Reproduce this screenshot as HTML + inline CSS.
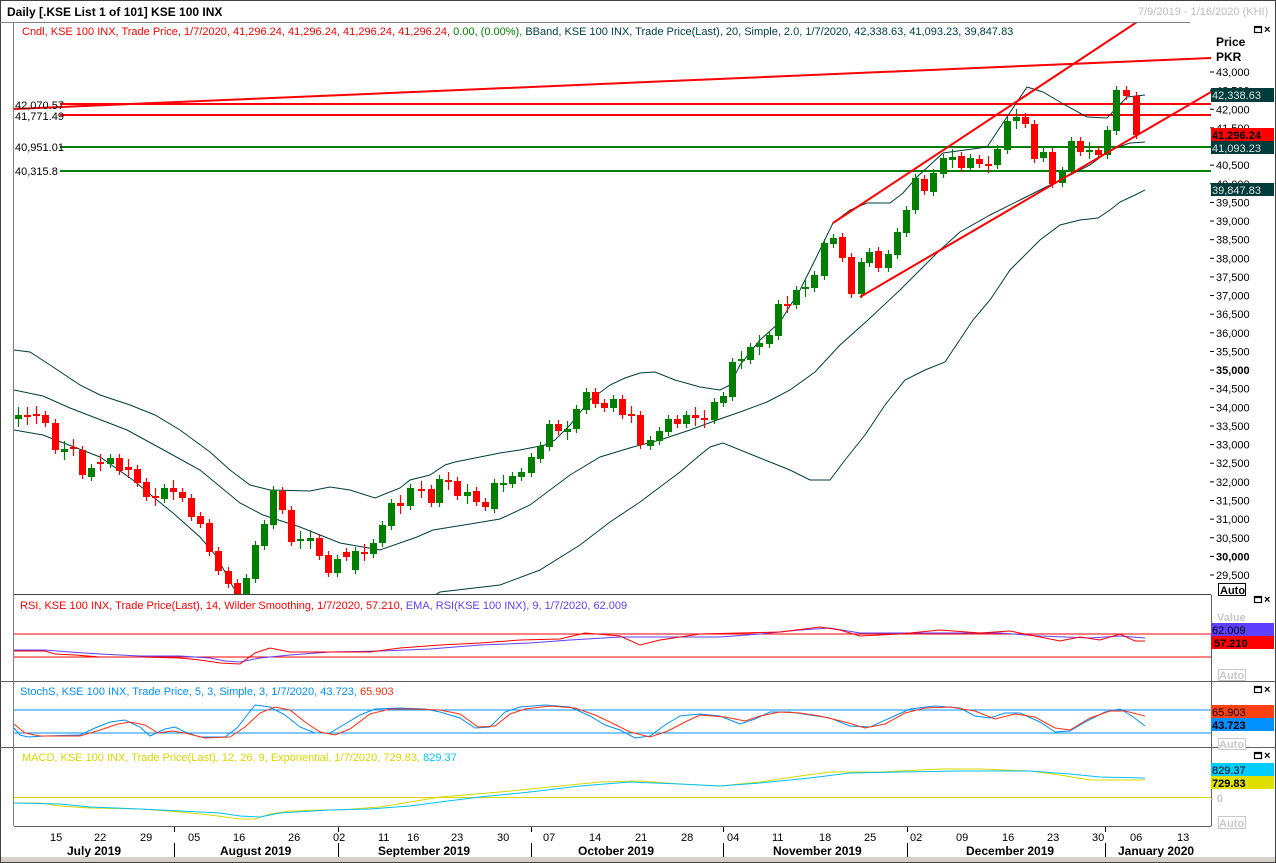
<!DOCTYPE html>
<html><head><meta charset="utf-8">
<style>
html,body{margin:0;padding:0;background:#fff;}
svg{display:block;font-family:"Liberation Sans",Tahoma,sans-serif;}
text{font-size:11px;}
.b{font-weight:bold;}
</style></head>
<body>
<svg id="s" width="1276" height="863" viewBox="0 0 1276 863" xmlns="http://www.w3.org/2000/svg">
<defs>
<clipPath id="mp"><rect x="14" y="23" width="1197" height="571"/></clipPath>
</defs>
<rect width="1276" height="863" fill="#fff"/>
<!-- frame -->
<rect x="0.5" y="0.5" width="1275" height="862" fill="none" stroke="#404040"/>
<line x1="0" y1="22.5" x2="1190" y2="22.5" stroke="#808080"/>
<text x="7" y="16" class="b" font-size="12" style="font-size:12px">Daily [.KSE List 1 of 101] KSE 100 INX</text>
<text x="1138" y="15" fill="#bdbdbd">7/9/2019 - 1/16/2020 (KHI)</text>
<text x="22" y="35"><tspan fill="#ff0000">Cndl, KSE 100 INX, Trade Price,  1/7/2020, 41,296.24, 41,296.24, 41,296.24, 41,296.24, </tspan><tspan fill="#008000">0.00, (0.00%), </tspan><tspan fill="#004040">BBand, KSE 100 INX, Trade Price(Last),  20, Simple, 2.0, 1/7/2020, 42,338.63, 41,093.23, 39,847.83</tspan></text>

<!-- window buttons -->
<g stroke="#000" fill="none" stroke-width="1.2">
<rect x="1254.5" y="26.5" width="7" height="6"/><line x1="1254" y1="27.5" x2="1262" y2="27.5"/>
<rect x="1254.5" y="596.5" width="7" height="6"/><line x1="1254" y1="597.5" x2="1262" y2="597.5"/>
<rect x="1254.5" y="686.5" width="7" height="6"/><line x1="1254" y1="687.5" x2="1262" y2="687.5"/>
<rect x="1254.5" y="752.5" width="7" height="6"/><line x1="1254" y1="753.5" x2="1262" y2="753.5"/>
</g>
<g class="b" font-size="11"><text x="1264" y="33">×</text><text x="1264" y="603">×</text><text x="1264" y="693">×</text><text x="1264" y="759">×</text></g>

<text x="1216" y="46" class="b" style="font-size:12px">Price</text>
<text x="1216" y="61" class="b" style="font-size:12px">PKR</text>

<g id="axis"></g>

<!-- horizontal lines -->
<g clip-path="url(#mp)">
<line x1="14" y1="109" x2="1211" y2="58" stroke="#ff0000" stroke-width="2"/>
<line x1="60" y1="104" x2="1211" y2="104" stroke="#ff0000" stroke-width="2"/>
<line x1="60" y1="115" x2="1211" y2="115" stroke="#ff0000" stroke-width="2"/>
<line x1="60" y1="147" x2="1211" y2="147" stroke="#008000" stroke-width="2"/>
<line x1="60" y1="171" x2="1211" y2="171" stroke="#008000" stroke-width="2"/>
<g id="bb" fill="none" stroke="#003c3c" stroke-width="1"></g>
<g id="cdl"></g>
<line x1="833" y1="223" x2="1140" y2="20" stroke="#ff0000" stroke-width="2"/>
<line x1="860" y1="297" x2="1211" y2="92" stroke="#ff0000" stroke-width="2"/>
</g>
<text x="15" y="109">42,070.57</text>
<text x="15" y="120">41,771.49</text>
<text x="15" y="151">40,951.01</text>
<text x="15" y="175">40,315.8</text>

<!-- badges -->
<rect x="1211" y="88" width="63" height="14" fill="#003c3c"/><text x="1212" y="99" fill="#e0e0e0">42,338.63</text>
<rect x="1211" y="128" width="63" height="13" fill="#ff0000"/><text x="1212" y="139" class="b" fill="#000">41,296.24</text>
<rect x="1211" y="141" width="63" height="13" fill="#003c3c"/><text x="1212" y="152" fill="#e0e0e0">41,093.23</text>
<rect x="1211" y="183" width="63" height="13" fill="#003c3c"/><text x="1212" y="194" fill="#e0e0e0">39,847.83</text>
<rect x="1218.5" y="583.5" width="27" height="12" fill="#fff" stroke="#000"/><text x="1220" y="594" class="b">Auto</text>

<!-- panel frames -->
<line x1="14" y1="594.5" x2="1211" y2="594.5" stroke="#404040"/>
<line x1="13.5" y1="23" x2="13.5" y2="826" stroke="#808080"/>
<line x1="0" y1="681.5" x2="1276" y2="681.5" stroke="#606060"/>
<line x1="0" y1="747.5" x2="1276" y2="747.5" stroke="#606060"/>
<line x1="1211.5" y1="595" x2="1211.5" y2="826" stroke="#606060"/>
<line x1="14" y1="826.5" x2="1211" y2="826.5" stroke="#606060"/>

<!-- RSI -->
<text x="20" y="609"><tspan fill="#ff0000">RSI, KSE 100 INX, Trade Price(Last),  14, Wilder Smoothing,  1/7/2020, 57.210, </tspan><tspan fill="#6040ff">EMA, RSI(KSE 100 INX),  9,  1/7/2020, 62.009</tspan></text>
<line x1="14" y1="634" x2="1211" y2="634" stroke="#ff0000"/>
<line x1="14" y1="657" x2="1211" y2="657" stroke="#ff0000"/>
<polyline fill="none" stroke="#6040ff" points="14,650 45,650 70,652 100,654 140,656 180,656 210,658 225,661 240,662 260,658 290,655 330,652 380,651 430,649 480,645 530,643 570,640 620,637 680,637 720,637 760,634 800,630 830,628 860,633 900,633 950,633 1000,633 1040,636 1090,638 1120,636 1145,638"/>
<polyline fill="none" stroke="#ff0000" points="14,651 45,651 55,654 75,655 100,657 140,657 180,658 200,660 220,663 240,664 255,653 270,648 290,652 330,652 370,652 400,648 440,645 480,643 520,640 560,639 585,633 620,636 640,645 660,640 700,634 740,633 780,632 820,627 840,630 860,636 900,634 940,630 980,633 1010,631 1040,637 1060,641 1080,637 1100,640 1120,634 1135,641 1145,641"/>
<text x="1217" y="621" fill="#c8c8c8" class="b">Value</text>
<rect x="1211" y="623" width="63" height="13" fill="#6040ff"/><text x="1212" y="634" fill="#000">62.009</text>
<rect x="1211" y="636" width="63" height="13" fill="#ff0000"/><text x="1214" y="647" class="b">57.210</text>
<rect x="1218.5" y="669.5" width="27" height="11" fill="#fff" stroke="#c8c8c8"/><text x="1219" y="679" fill="#c8c8c8" class="b">Auto</text>

<!-- Stoch -->
<text x="20" y="695"><tspan fill="#0090ff">StochS, KSE 100 INX, Trade Price,  5, 3, Simple, 3,  1/7/2020, 43.723, </tspan><tspan fill="#ff3010">65.903</tspan></text>
<line x1="14" y1="710" x2="1211" y2="710" stroke="#0090ff"/>
<line x1="14" y1="733" x2="1211" y2="733" stroke="#0090ff"/>
<polyline fill="none" stroke="#0090ff" points="14,728 20,735 28,737 45,736 80,735 95,728 110,722 125,720 140,727 150,736 165,729 175,727 185,732 200,737 225,737 237,728 255,705 270,707 285,715 300,727 315,733 330,733 345,724 360,715 375,709 400,708 425,709 440,712 460,718 475,728 490,727 505,712 520,707 545,705 570,707 590,716 605,725 620,730 635,738 650,736 665,725 680,716 700,714 720,716 740,724 755,719 770,712 790,712 810,715 830,718 850,726 870,727 890,718 910,709 935,706 960,708 975,716 990,718 1005,713 1020,713 1040,722 1055,732 1070,731 1085,722 1105,712 1120,709 1132,716 1145,726"/>
<polyline fill="none" stroke="#ff3010" points="14,724 25,733 40,736 80,736 100,730 118,724 130,722 145,725 158,733 172,731 185,733 205,738 230,737 245,727 260,713 275,707 290,710 305,722 320,732 335,735 350,729 370,714 390,709 415,709 440,710 460,714 478,727 495,726 510,714 525,709 550,706 575,708 595,715 610,722 630,732 650,737 668,731 685,722 700,715 725,717 745,721 760,716 780,712 800,713 820,716 845,722 865,728 885,724 905,713 925,708 950,707 975,711 995,719 1015,714 1035,717 1055,728 1070,730 1090,718 1110,711 1125,711 1145,716"/>
<text x="1217" y="712" fill="#c8c8c8" class="b">Value</text>
<rect x="1211" y="705" width="63" height="13" fill="#ff4010"/><text x="1212" y="716" fill="#000">65.903</text>
<rect x="1211" y="718" width="63" height="13" fill="#0090ff"/><text x="1212" y="729" class="b">43.723</text>
<rect x="1218.5" y="738.5" width="27" height="11" fill="#fff" stroke="#c8c8c8"/><text x="1219" y="748" fill="#c8c8c8" class="b">Auto</text>

<!-- MACD -->
<text x="22" y="761"><tspan fill="#d8d800">MACD, KSE 100 INX, Trade Price(Last),  12, 26, 9, Exponential,  1/7/2020, 729.83, </tspan><tspan fill="#00c8ff">829.37</tspan></text>
<line x1="14" y1="797.5" x2="1211" y2="797.5" stroke="#d8d800"/>
<polyline fill="none" stroke="#d8d800" points="14,803 40,803 60,806 90,808 140,809 180,812 210,815 240,819 255,819 270,814 290,811 320,810 340,810 380,807 410,802 440,797 500,792 550,787 600,782 640,781 680,784 720,786 760,782 800,776 830,772 880,772 940,769 980,769 1030,771 1060,775 1090,780 1110,780 1145,780"/>
<polyline fill="none" stroke="#00c0ff" points="14,803 60,804 90,807 140,809 180,811 220,813 240,816 260,817 280,813 330,810 370,809 410,806 440,802 480,797 530,792 580,786 630,782 680,784 720,786 760,783 810,778 850,773 900,772 960,771 1030,771 1070,774 1100,777 1145,778"/>
<rect x="1211" y="763" width="63" height="13" fill="#00ccff"/><text x="1212" y="774" fill="#000">829.37</text>
<rect x="1211" y="776" width="63" height="13" fill="#e0e000"/><text x="1212" y="787" class="b">729.83</text>
<text x="1210" y="802" fill="#c8c8c8" class="b">- 0</text>
<rect x="1218.5" y="816.5" width="27" height="12" fill="#fff" stroke="#c8c8c8"/><text x="1219" y="827" fill="#c8c8c8" class="b">Auto</text>

<!-- date axis -->
<g fill="#000">
<text x="50" y="841">15</text><text x="94" y="841">22</text><text x="140" y="841">29</text><text x="188" y="841">05</text><text x="233" y="841">16</text><text x="288" y="841">26</text><text x="333" y="841">02</text><text x="378" y="841">11</text><text x="407" y="841">16</text><text x="451" y="841">23</text><text x="497" y="841">30</text><text x="543" y="841">07</text><text x="589" y="841">14</text><text x="635" y="841">21</text><text x="681" y="841">28</text><text x="727" y="841">04</text><text x="772" y="841">11</text><text x="819" y="841">18</text><text x="864" y="841">25</text><text x="910" y="841">02</text><text x="956" y="841">09</text><text x="1002" y="841">16</text><text x="1047" y="841">23</text><text x="1092" y="841">30</text><text x="1130" y="841">06</text><text x="1177" y="841">13</text>
</g>
<g class="b" style="font-size:12px">
<text x="67" y="855" style="font-size:12px">July 2019</text>
<text x="220" y="855" style="font-size:12px">August 2019</text>
<text x="378" y="855" style="font-size:12px">September 2019</text>
<text x="578" y="855" style="font-size:12px">October 2019</text>
<text x="773" y="855" style="font-size:12px">November 2019</text>
<text x="966" y="855" style="font-size:12px">December 2019</text>
<text x="1118" y="855" style="font-size:12px">January 2020</text>
</g>
<g stroke="#000">
<line x1="174.5" y1="827" x2="174.5" y2="832"/><line x1="174.5" y1="843" x2="174.5" y2="857"/>
<line x1="338.5" y1="827" x2="338.5" y2="832"/><line x1="338.5" y1="843" x2="338.5" y2="857"/>
<line x1="531.5" y1="827" x2="531.5" y2="832"/><line x1="531.5" y1="843" x2="531.5" y2="857"/>
<line x1="723.5" y1="827" x2="723.5" y2="832"/><line x1="723.5" y1="843" x2="723.5" y2="857"/>
<line x1="907.5" y1="827" x2="907.5" y2="832"/><line x1="907.5" y1="843" x2="907.5" y2="857"/>
<line x1="1105.5" y1="827" x2="1105.5" y2="832"/><line x1="1105.5" y1="843" x2="1105.5" y2="857"/>
</g>
<rect x="1" y="857" width="1274" height="5" fill="#d4d0c8"/>
</svg>
<script>
(function(){
var NS="http://www.w3.org/2000/svg";
function el(p,t,a){var e=document.createElementNS(NS,t);for(var k in a)e.setAttribute(k,a[k]);p.appendChild(e);return e;}
var ax=document.getElementById("axis");
var labs=[[43000,1],[42500,0],[42000,1],[41500,0],[40500,1],[40000,0],[39500,1],[39000,1],[38500,1],[38000,1],[37500,1],[37000,1],[36500,1],[36000,1],[35500,1],[35000,2],[34500,1],[34000,1],[33500,1],[33000,1],[32500,1],[32000,1],[31500,1],[31000,1],[30500,1],[30000,2],[29500,1]];
labs.forEach(function(l){var y=72+(43000-l[0])*0.03726;
 el(ax,"line",{x1:1210,y1:y,x2:1214,y2:y,stroke:"#000"});
 var t=el(ax,"text",{x:1216,y:y+4});t.textContent=l[0].toLocaleString("en-US");
 if(l[1]==2)t.setAttribute("font-weight","bold");});
var bb=document.getElementById("bb");
var U="14,350 30,352 50,365 80,385 100,395 130,405 155,415 180,430 210,452 230,470 250,485 270,490 310,491 330,487 350,490 375,498 400,488 410,480 430,475 445,465 455,462 480,457 500,453 520,450 535,447 545,445 555,440 570,425 590,400 610,385 625,378 640,373 655,372 675,380 700,387 720,390 730,385 740,365 760,340 780,322 800,290 815,260 833,223 850,210 867,203 890,203 903,193 917,177 943,153 987,147 1003,123 1027,87 1043,92 1065,105 1087,117 1107,118 1127,97 1145,95";
var M="14,390 43,396 70,408 127,430 160,448 200,470 240,503 263,515 300,527 340,543 380,550 417,537 433,530 470,524 500,519 530,505 570,475 600,457 633,447 660,440 690,430 717,420 740,412 767,402 790,390 815,372 840,345 868,320 900,290 940,250 960,232 990,215 1020,200 1050,185 1070,175 1090,165 1110,150 1130,143 1145,142";
var L="14,430 43,435 100,457 133,480 157,500 173,513 200,537 217,557 233,587 245,605 300,620 400,615 440,592 500,585 540,570 580,545 610,522 640,502 680,472 700,455 710,447 723,443 760,458 790,470 810,480 830,480 845,460 865,435 885,405 905,380 925,370 945,362 973,320 990,300 1010,270 1040,240 1060,225 1080,220 1098,218 1110,210 1120,202 1135,195 1145,190";
[U,M,L].forEach(function(p){el(bb,"polyline",{points:p});});
var C=[[18,415,419,"g"],[27,415,417,"r"],[36,414,416,"r"],[45,415,423,"r"],[55,423,450,"r"],[64,449,452,"g"],[73,447,448,"r"],[82,450,475,"r"],[91,468,477,"g"],[100,462,463,"r"],[110,458,464,"g"],[119,458,471,"r"],[128,467,470,"r"],[137,469,483,"r"],[146,482,497,"r"],[155,496,498,"r"],[164,488,499,"g"],[173,488,492,"r"],[182,492,498,"r"],[191,498,517,"r"],[200,516,524,"r"],[209,523,552,"r"],[218,551,571,"r"],[228,571,584,"r"],[237,583,598,"r"],[246,578,598,"g"],[255,545,579,"g"],[264,524,546,"g"],[273,490,525,"g"],[282,491,510,"r"],[291,510,542,"r"],[300,539,541,"g"],[310,538,541,"g"],[319,538,556,"r"],[328,555,573,"r"],[337,559,573,"g"],[346,552,557,"r"],[355,551,570,"g"],[364,552,553,"r"],[373,543,554,"g"],[382,525,543,"g"],[391,503,526,"g"],[400,503,506,"r"],[410,488,506,"g"],
[421,489,490,"r"],[431,489,503,"r"],[439,479,503,"g"],[448,480,482,"r"],[457,481,496,"r"],[467,492,496,"g"],[476,491,502,"r"],[485,502,507,"r"],[494,483,509,"g"],[503,483,484,"g"],[512,476,484,"g"],[521,472,477,"g"],[531,457,473,"g"],[540,446,459,"g"],[549,424,447,"g"],[558,424,431,"r"],[567,429,432,"g"],[576,409,429,"g"],[586,392,410,"g"],[595,392,404,"r"],[604,403,408,"r"],[613,399,408,"g"],[622,399,415,"r"],[631,414,415,"r"],[640,415,445,"r"],[650,440,446,"g"],[659,431,441,"g"],[668,419,432,"g"],[677,419,424,"r"],[686,415,424,"g"],[695,415,418,"r"],[704,418,420,"r"],[714,402,420,"g"],[723,396,403,"g"],[732,362,397,"g"],[741,359,361,"g"],[750,347,360,"g"],[759,343,347,"g"],[769,335,344,"g"],[778,304,336,"g"],[787,304,305,"r"],[796,290,305,"g"],[805,287,289,"g"],[814,275,288,"g"],[824,243,276,"g"],
[833,238,244,"g"],[842,237,258,"r"],[851,257,294,"r"],[861,262,294,"g"],[869,252,263,"g"],[878,251,268,"r"],[888,254,268,"g"],[897,232,255,"g"],[906,210,233,"g"],[915,178,210,"g"],[924,179,191,"r"],[933,173,192,"g"],[943,158,174,"g"],[952,157,160,"g"],[961,156,168,"r"],[970,158,168,"g"],[979,159,164,"r"],[988,164,165,"r"],[997,149,165,"g"],[1007,121,150,"g"],[1016,117,121,"g"],[1025,117,124,"r"],[1034,124,159,"r"],[1043,152,158,"g"],[1052,152,184,"r"],[1062,171,183,"g"],[1071,141,171,"g"],[1080,141,152,"r"],[1089,150,151,"g"],[1098,150,155,"r"],[1107,130,155,"g"],[1116,90,131,"g"],[1126,90,96,"r"],[1136,96,135,"r"]];
var cg=document.getElementById("cdl");
C.forEach(function(c,i){var col=c[3]=="g"?"#007f00":"#ff0000";var h=c[2]-c[1];var w=h<5?8:4;
 el(cg,"line",{x1:c[0]+0.5,y1:c[1]-w,x2:c[0]+0.5,y2:c[2]+w,stroke:col,"stroke-width":1.2});
 el(cg,"rect",{x:c[0]-3,y:c[1],width:7,height:Math.max(2,h),fill:col});});
})();
</script>
</body></html>
